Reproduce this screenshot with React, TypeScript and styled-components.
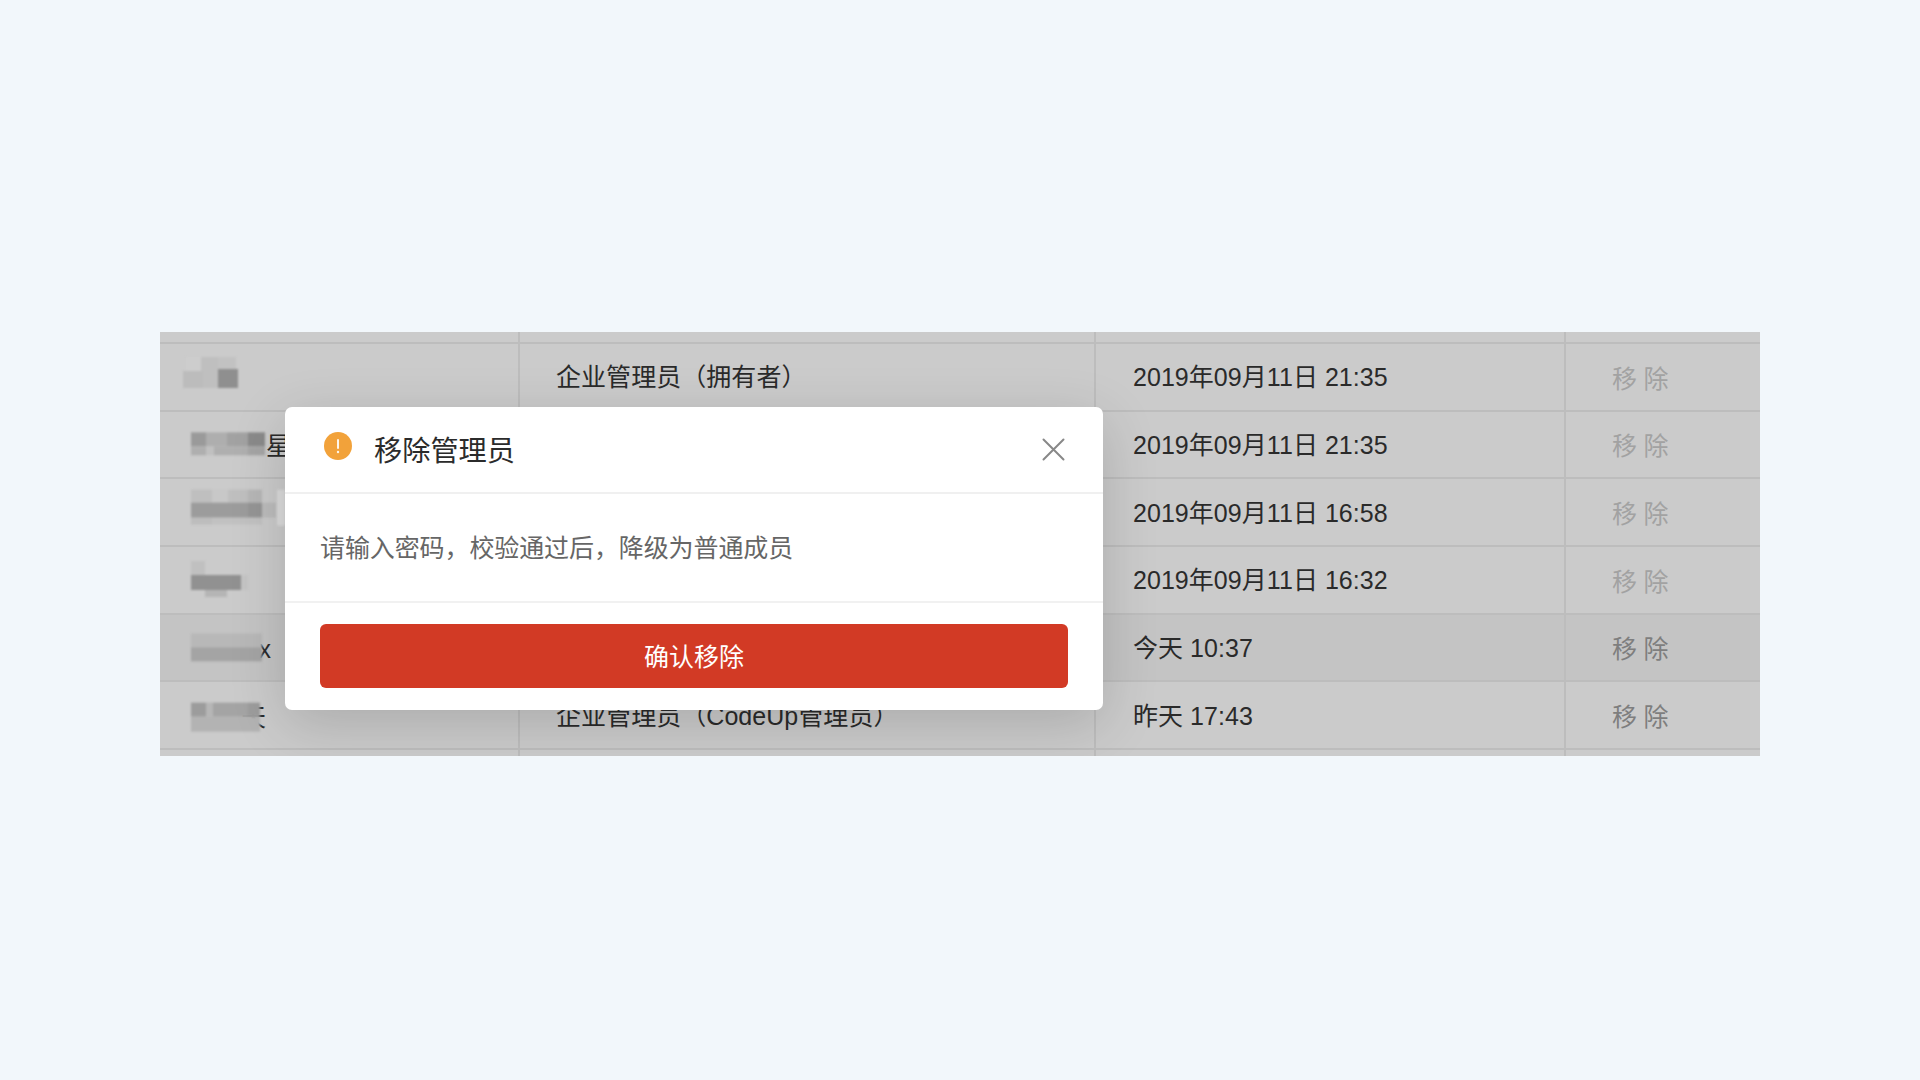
import React from "react";
import styled, { createGlobalStyle } from "styled-components";

const Global = createGlobalStyle`
  html, body { margin: 0; padding: 0; background: #f2f7fb; }
  body { font-family: "Liberation Sans", "Noto Sans CJK SC", sans-serif; }
`;

const Page = styled.div`
  width: 1920px;
  height: 1080px;
  box-sizing: border-box;
  padding: 332px 160px 0;
  background: #f2f7fb;
  overflow: hidden;
`;

const Table = styled.div`
  position: relative;
  display: flex;
  flex-direction: column;
  width: 1600px;
  height: 424px;
  background: #cbcbcb;
  overflow: hidden;
`;

const COLUMNS = "358px 576px 470px 196px";

const EdgeStrip = styled.div<{ $height: number; $bottom?: boolean }>`
  display: grid;
  grid-template-columns: ${COLUMNS};
  height: ${(p) => p.$height}px;
  flex: none;
  box-sizing: content-box;
  border-bottom: ${(p) => (p.$bottom ? "2px solid #bdbdbd" : "none")};
`;

const StripCell = styled.div`
  & + & { border-left: 2px solid #bdbdbd; }
`;

const Row = styled.div<{ $hover?: boolean }>`
  display: grid;
  grid-template-columns: ${COLUMNS};
  height: 67.67px;
  flex: none;
  box-sizing: border-box;
  border-bottom: 2px solid #bdbdbd;
  background: ${(p) => (p.$hover ? "#c4c4c4" : "#cbcbcb")};
  font-size: 25px;
  color: #2a2a2a;
`;

const NameCell = styled.div<{ $indent: number; $drop: number }>`
  position: relative;
  display: flex;
  align-items: center;
  padding-left: ${(p) => p.$indent}px;
  padding-top: ${(p) => p.$drop}px;
  box-sizing: border-box;
`;

const MosaicArt = styled.svg`
  position: absolute;
  left: 0;
  top: 0;
  width: 358px;
  height: 68px;
  filter: blur(0.8px);
`;

const TextCell = styled.div<{ $inset: number }>`
  display: flex;
  align-items: center;
  padding: 0 0 3px ${(p) => p.$inset}px;
  border-left: 2px solid #bdbdbd;
  white-space: nowrap;
  letter-spacing: 0.05px;
`;

const ActionCell = styled.div<{ $active?: boolean }>`
  display: flex;
  align-items: center;
  padding: 0 0 0 46px;
  border-left: 2px solid #bdbdbd;
  color: ${(p) => (p.$active ? "#7e7e7e" : "#a2a2a2")};
  letter-spacing: 6.5px;
  white-space: nowrap;
`;

const Modal = styled.div`
  position: absolute;
  left: 125px;
  top: 75px;
  width: 818px;
  height: 303px;
  display: flex;
  flex-direction: column;
  background: #fff;
  border-radius: 7px;
  box-shadow: 0 14px 56px rgba(0, 0, 0, 0.16);
`;

const ModalHeader = styled.div`
  display: flex;
  align-items: center;
  height: 85px;
  flex: none;
  box-sizing: content-box;
  padding: 0 38px 0 39px;
  border-bottom: 2px solid #f0f0f0;
`;

const WarnIcon = styled.svg`
  width: 28px;
  height: 28px;
  flex: none;
  margin: 0 22px 7px 0;
`;

const Title = styled.div`
  flex: 1;
  font-size: 28.2px;
  color: #2b2b2b;
  line-height: 40px;
  padding-top: 2px;
`;

const CloseButton = styled.button`
  display: flex;
  padding: 0;
  border: 0;
  background: none;
  width: 23px;
  height: 23px;
`;

const ModalBody = styled.div`
  display: flex;
  align-items: center;
  height: 109px;
  flex: none;
  box-sizing: border-box;
  padding: 0 35px 3px;
  border-bottom: 2px solid #f1f1f1;
  font-size: 25px;
  letter-spacing: -0.1px;
  color: #666;
`;

const ModalFooter = styled.div`
  padding: 21px 35px 21px;
`;

const ConfirmButton = styled.button`
  display: block;
  width: 100%;
  height: 64px;
  border: 0;
  padding: 0 0 2px;
  border-radius: 6px;
  background: #d23a25;
  color: #fff;
  font: inherit;
  font-size: 25px;
`;

type Block = [number, number, number, number, string];

const rows: {
  indent: number;
  drop: number;
  tail: string;
  role: string;
  time: string;
  hover?: boolean;
  active?: boolean;
  top: number;
  blocks: Block[];
}[] = [
  {
    indent: 0, drop: 0, tail: "", role: "企业管理员（拥有者）", time: "2019年09月11日 21:35", top: 344,
    blocks: [
      [186, 357, 15, 14, "#cdcdcd"], [201, 357, 17, 17, "#bfbfbf"], [218, 357, 18, 12, "#c2c2c2"],
      [183, 371, 20, 17, "#bcbcbc"], [203, 374, 15, 14, "#bfbfbf"], [218, 369, 20, 19, "#8f8f8f"],
    ],
  },
  {
    indent: 106, drop: 0, tail: "星", role: "", time: "2019年09月11日 21:35", top: 411.67,
    blocks: [
      [191, 432, 15, 14, "#9a9a9a"], [206, 432, 21, 14, "#aeaeae"], [227, 432, 21, 14, "#a2a2a2"], [248, 432, 17, 14, "#8a8a8a"],
      [191, 446, 15, 9, "#afafaf"], [206, 446, 8, 9, "#c0c0c0"], [214, 446, 34, 9, "#afafaf"], [248, 446, 17, 9, "#a5a5a5"],
    ],
  },
  {
    indent: 0, drop: 0, tail: "", role: "", time: "2019年09月11日 16:58", top: 479.34,
    blocks: [
      [191, 490, 21, 13, "#bfbfbf"], [212, 490, 16, 13, "#c8c8c8"], [228, 490, 20, 13, "#bfbfbf"], [248, 490, 14, 13, "#b6b6b6"],
      [191, 503, 57, 15, "#9c9c9c"], [248, 503, 14, 15, "#959595"], [262, 503, 14, 15, "#bcbcbc"],
      [191, 518, 21, 7, "#bdbdbd"], [212, 518, 50, 7, "#c1c1c1"], [277, 490, 8, 36, "#dcdcdc"],
    ],
  },
  {
    indent: 0, drop: 0, tail: "", role: "", time: "2019年09月11日 16:32", top: 547,
    blocks: [
      [191, 561, 14, 14, "#c0c0c0"], [191, 575, 50, 15, "#919191"], [241, 575, 7, 15, "#c4c4c4"], [205, 590, 22, 7, "#b5b5b5"],
    ],
  },
  {
    indent: 98.5, drop: 4, tail: "x", role: "", time: "今天 10:37", hover: true, active: true, top: 614.67,
    blocks: [
      [191, 633, 71, 14, "#b8b8b8"], [191, 647, 71, 14, "#a4a4a4"],
    ],
  },
  {
    indent: 81, drop: 0, tail: "天", role: "企业管理员（CodeUp管理员）", time: "昨天 17:43", active: true, top: 682.34,
    blocks: [
      [191, 703, 15, 14, "#9c9c9c"], [206, 703, 7, 14, "#b6b6b6"], [213, 703, 35, 14, "#a4a4a4"], [248, 703, 12, 14, "#9c9c9c"],
      [191, 717, 69, 15, "#b3b3b3"],
    ],
  },
];

const Mosaic = ({ blocks, top }: { blocks: Block[]; top: number }) => (
  <MosaicArt viewBox="0 0 358 68" aria-hidden="true">
    {blocks.map(([x, y, w, h, fill], i) => (
      <rect key={i} x={x - 160} y={y - top} width={w} height={h} fill={fill} />
    ))}
  </MosaicArt>
);

export default function App() {
  return (
    <Page>
      <Global />
      <Table>
        <EdgeStrip $height={10} $bottom>
          <StripCell />
          <StripCell />
          <StripCell />
          <StripCell />
        </EdgeStrip>
        {rows.map((r, i) => (
          <Row key={i} $hover={r.hover}>
            <NameCell $indent={r.indent} $drop={r.drop}>
              {r.tail}
              <Mosaic blocks={r.blocks} top={r.top} />
            </NameCell>
            <TextCell $inset={36}>{r.role}</TextCell>
            <TextCell $inset={37}>{r.time}</TextCell>
            <ActionCell $active={r.active}>移除</ActionCell>
          </Row>
        ))}
        <EdgeStrip $height={8}>
          <StripCell />
          <StripCell />
          <StripCell />
          <StripCell />
        </EdgeStrip>
        <Modal>
          <ModalHeader>
            <WarnIcon viewBox="0 0 28 28">
              <circle cx="14" cy="14" r="14" fill="#f2a23a" />
              <rect x="13" y="7" width="2" height="10" rx="1" fill="#fff" opacity="0.9" />
              <circle cx="14" cy="20" r="1.2" fill="#fff" opacity="0.9" />
            </WarnIcon>
            <Title>移除管理员</Title>
            <CloseButton aria-label="关闭">
              <svg width="23" height="23" viewBox="0 0 23 23">
                <path d="M1.5 1.5 L21.5 21.5 M21.5 1.5 L1.5 21.5" stroke="#888" strokeWidth="2" strokeLinecap="round" />
              </svg>
            </CloseButton>
          </ModalHeader>
          <ModalBody>请输入密码，校验通过后，降级为普通成员</ModalBody>
          <ModalFooter>
            <ConfirmButton>确认移除</ConfirmButton>
          </ModalFooter>
        </Modal>
      </Table>
    </Page>
  );
}
